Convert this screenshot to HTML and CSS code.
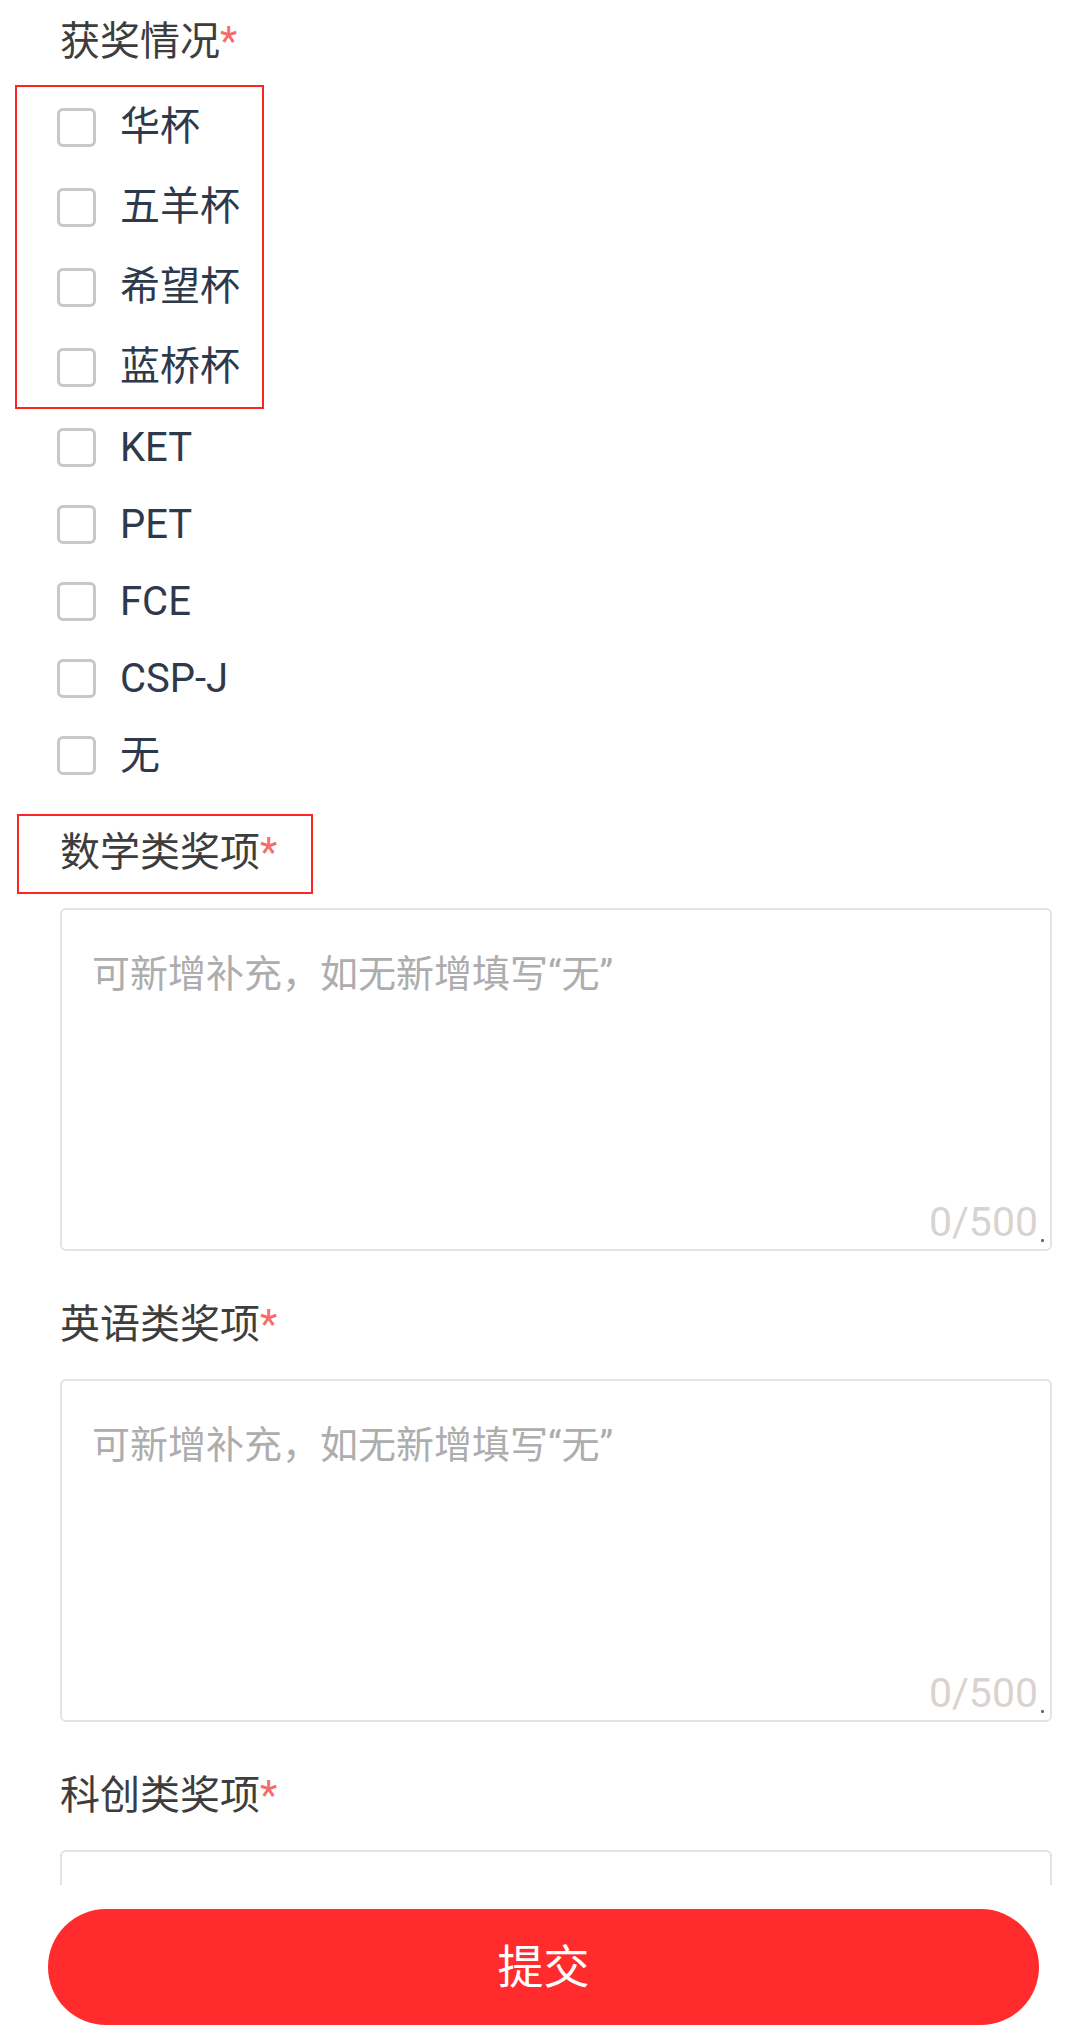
FILE: index.html
```html
<!DOCTYPE html>
<html lang="zh-CN">
<head>
<meta charset="utf-8">
<title>获奖情况</title>
<link rel="stylesheet" href="styles.css">
</head>
<body>
<div class="app">
  <main class="content">
    <div class="field-label first">获奖情况<span class="req">*</span></div>

    <div class="anno-box options">
      <label class="opt tall"><span class="box"></span><span class="opt-text">华杯</span></label>
      <label class="opt tall"><span class="box"></span><span class="opt-text">五羊杯</span></label>
      <label class="opt tall"><span class="box"></span><span class="opt-text">希望杯</span></label>
      <label class="opt tall"><span class="box"></span><span class="opt-text">蓝桥杯</span></label>
    </div>
    <div class="options rest">
      <label class="opt"><span class="box"></span><span class="opt-text">KET</span></label>
      <label class="opt"><span class="box"></span><span class="opt-text">PET</span></label>
      <label class="opt"><span class="box"></span><span class="opt-text">FCE</span></label>
      <label class="opt"><span class="box"></span><span class="opt-text">CSP-J</span></label>
      <label class="opt"><span class="box"></span><span class="opt-text">无</span></label>
    </div>

    <div class="anno-box label-box">
      <div class="field-label">数学类奖项<span class="req">*</span></div>
    </div>
    <div class="ta-wrap after-box">
      <textarea class="ta" placeholder="可新增补充，如无新增填写“无”"></textarea>
      <span class="count">0/500</span>
      <span class="grip"></span>
    </div>

    <div class="field-label spaced">英语类奖项<span class="req">*</span></div>
    <div class="ta-wrap">
      <textarea class="ta" placeholder="可新增补充，如无新增填写“无”"></textarea>
      <span class="count">0/500</span>
      <span class="grip"></span>
    </div>

    <div class="field-label spaced">科创类奖项<span class="req">*</span></div>
    <div class="ta-wrap">
      <textarea class="ta" placeholder="可新增补充，如无新增填写“无”"></textarea>
      <span class="count">0/500</span>
      <span class="grip"></span>
    </div>
  </main>
  <footer class="footer">
    <button class="submit" type="button">提交</button>
  </footer>
</div>
</body>
</html>
```
FILE: styles.css
```css
html, body {
  margin: 0;
  padding: 0;
  background: #ffffff;
}

body {
  font-family: Roboto, "Noto Sans CJK SC", sans-serif;
  font-size: 40px;
  color: #3b3b3b;
}

.app {
  display: flex;
  flex-direction: column;
  height: 100vh;
  width: 1080px;
}

.content {
  flex: 1 1 auto;
  overflow: hidden;
  padding-top: 12px;
}

.field-label {
  height: 60px;
  line-height: 60px;
  font-size: 40px;
  color: #3d3d3d;
  margin-left: 60px;
  white-space: nowrap;
}

.field-label.spaced {
  margin-top: 44px;
  margin-bottom: 24px;
}

.req {
  color: #f56c6c;
}

.anno-box {
  border: 2px solid #ff2424;
  box-sizing: border-box;
}

.options {
  display: flex;
  flex-direction: column;
}

.options.anno-box {
  margin-top: 13px;
  margin-left: 15px;
  width: 249px;
  padding-left: 40px;
}

.options.rest {
  padding-left: 57px;
}

.opt {
  display: flex;
  align-items: center;
  height: 77px;
}

.opt.tall {
  height: 80px;
}

.box {
  width: 39px;
  height: 39px;
  box-sizing: border-box;
  border: 3px solid #c8c8c8;
  border-radius: 6px;
  background: #ffffff;
  flex: none;
  margin-right: 24px;
}

.opt-text {
  font-size: 40px;
  line-height: 60px;
  color: #2e3a4c;
  white-space: nowrap;
}

.label-box {
  margin-top: 20px;
  margin-left: 17px;
  width: 296px;
  padding: 7px 0 9px 41px;
}

.label-box .field-label {
  margin-left: 0;
}

.ta-wrap {
  position: relative;
  margin-left: 60px;
  width: 992px;
  height: 343px;
}

.ta-wrap.after-box {
  margin-top: 14px;
}

.ta {
  display: block;
  width: 100%;
  height: 100%;
  box-sizing: border-box;
  border: 2px solid #e3e3e3;
  border-radius: 6px;
  padding: 36px 30px;
  margin: 0;
  font-family: Roboto, "Noto Sans CJK SC", sans-serif;
  font-size: 38px;
  line-height: 57px;
  color: #333333;
  background: #ffffff;
  resize: none;
  outline: none;
}

.ta::placeholder {
  color: #adadad;
  opacity: 1;
}

.count {
  position: absolute;
  right: 14px;
  bottom: 8px;
  font-size: 41px;
  line-height: 41px;
  color: #d9d3cf;
}

.grip {
  position: absolute;
  right: 8px;
  bottom: 9px;
  width: 3px;
  height: 3px;
  border-radius: 1px;
  background: #6a6a6a;
}

.footer {
  flex: none;
  height: 143px;
  background: #ffffff;
  box-sizing: border-box;
  padding: 24px 41px 0 48px;
}

.submit {
  display: block;
  width: 100%;
  height: 116px;
  border: none;
  border-radius: 58px;
  background: #ff2b2d;
  color: #ffffff;
  font-family: Roboto, "Noto Sans CJK SC", sans-serif;
  font-size: 46px;
  line-height: 116px;
  padding: 0;
  text-align: center;
}
```
